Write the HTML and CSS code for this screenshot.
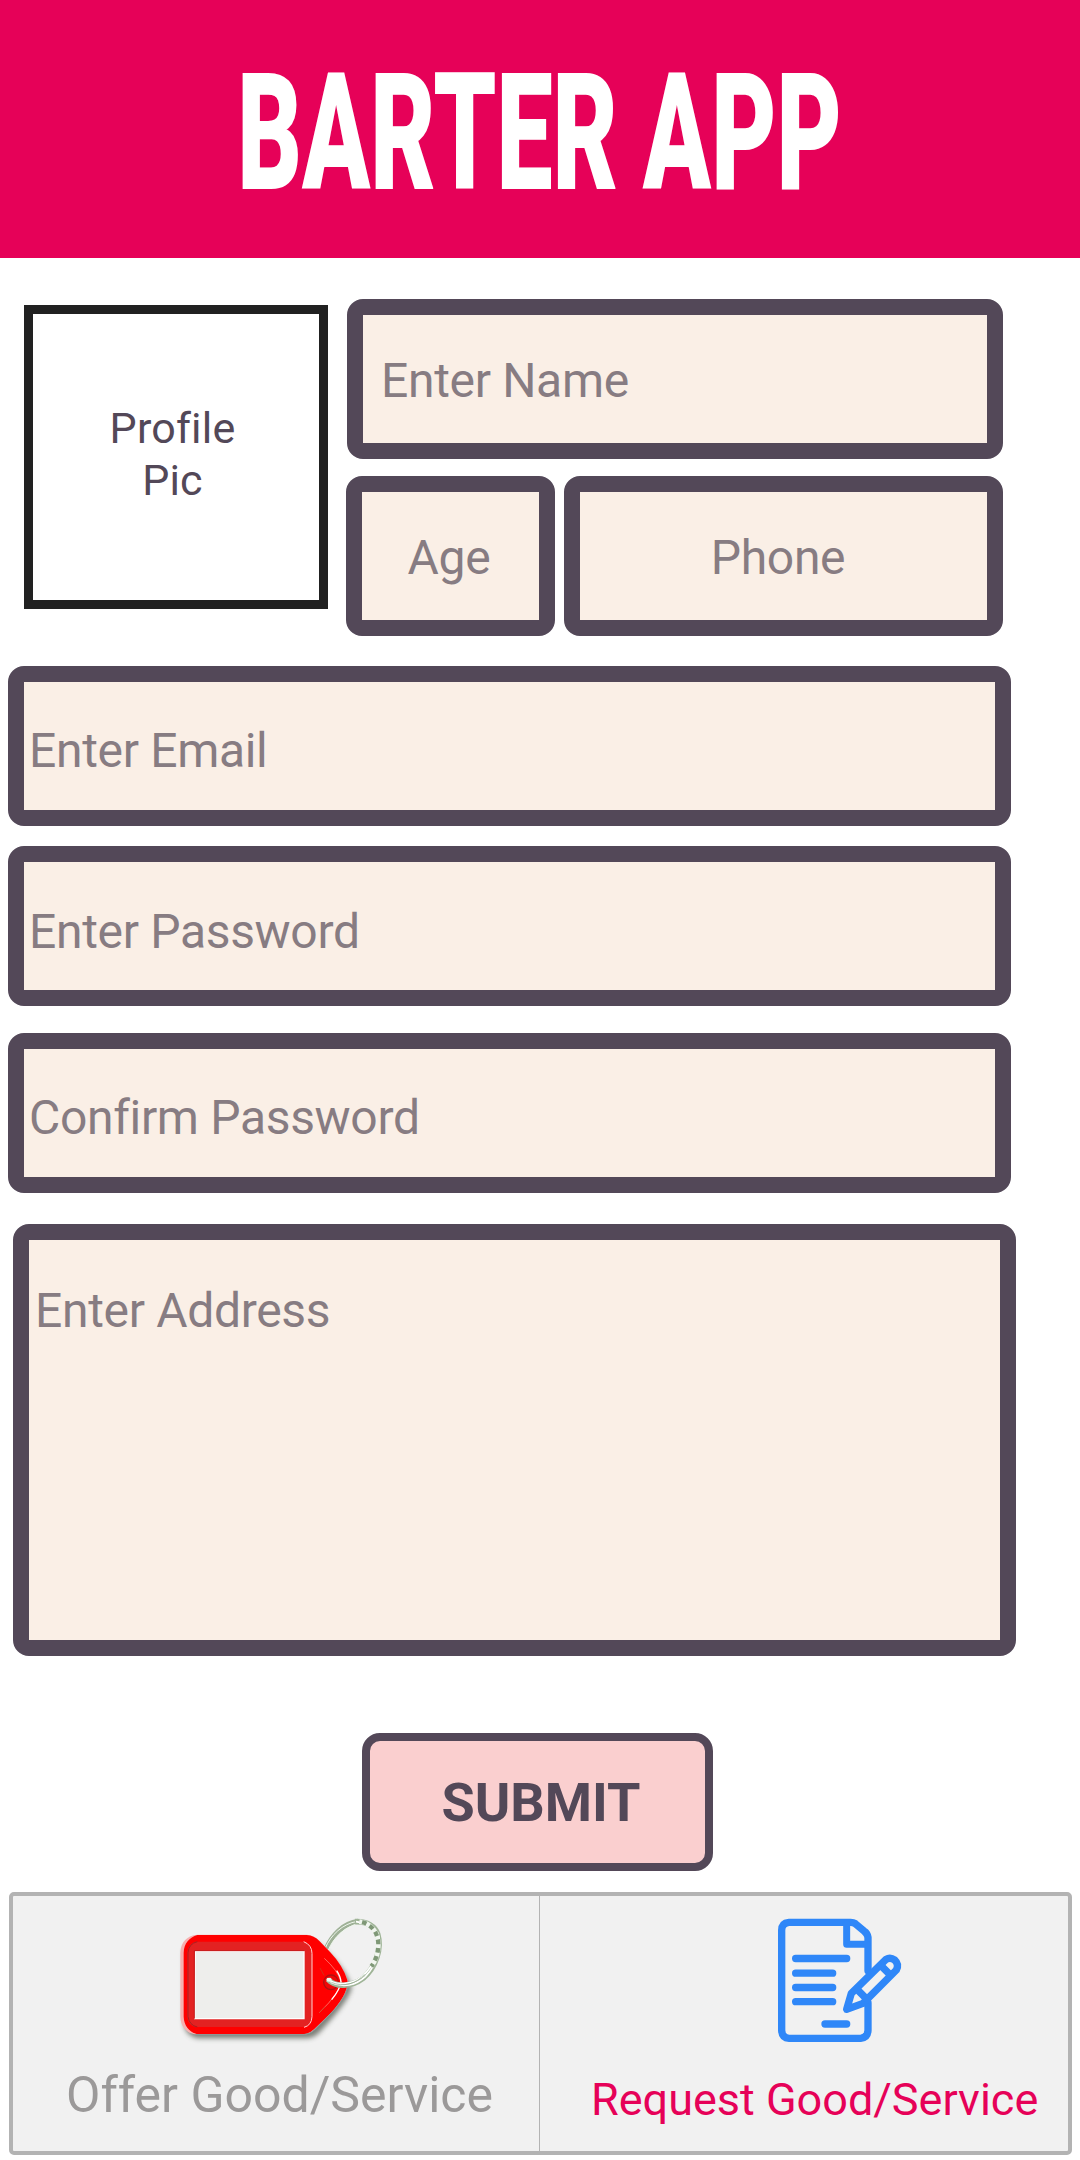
FILE: index.html
```html
<!DOCTYPE html>
<html lang="en">
<head>
<meta charset="utf-8">
<title>Barter App</title>
<link rel="stylesheet" href="styles.css">
</head>
<body>
<header class="header"><h1 class="title">BARTER APP</h1></header>
<main class="form">
  <section class="profile">
    <div class="picture">Profile<br>Pic</div>
    <div class="details">
      <div class="field name">Enter Name</div>
      <div class="row">
        <div class="field age">Age</div>
        <div class="field phone">Phone</div>
      </div>
    </div>
  </section>
  <div class="field wide email">Enter Email</div>
  <div class="field wide password">Enter Password</div>
  <div class="field wide confirm">Confirm Password</div>
  <div class="field address">Enter Address</div>
  <button class="submit">SUBMIT</button>
</main>
<nav class="tabs">
  <a class="tab offer">
    <svg class="tag" viewBox="0 0 720 480" aria-hidden="true">
      <defs>
        <filter id="soft" x="-20%" y="-20%" width="140%" height="150%"><feGaussianBlur stdDeviation="8"/></filter>
      </defs>
      <path d="M110 122H450Q480 130 500 155Q560 210 575 262Q570 300 480 395Q466 413 440 415H110Q76 405 72 372V160Q80 122 110 122Z" fill="#666b62" opacity=".85" filter="url(#soft)"/>
      <path d="M497 150C515 105 550 70 595 64" fill="none" stroke="#9fb197" stroke-width="15"/>
      <path d="M495 146C512 105 548 71 592 64M504 152C520 112 555 80 598 70" fill="none" stroke="#eef6ec" stroke-width="3"/>
      <path d="M112 104H440Q462 105 478 122L510 155Q548 195 563 240Q566 262 550 290Q530 325 498 355L464 389Q450 403 430 404H112C82 402 62 382 61 350V158C62 126 82 106 112 104Z" fill="#f6b0b0"/>
      <path d="M112 105H440Q462 106 478 123L510 156Q548 196 562 240Q565 262 549 290Q530 323 498 353L462 388Q448 402 430 403H112C88 396 72 378 71 350V158C72 130 88 112 112 105Z" fill="#f00"/>
      <path d="M106 404H430Q450 403 464 389L500 353Q552 303 564 263" fill="none" stroke="#839b99" stroke-width="3"/>
      <path d="M108 125H430Q456 133 456 160V350Q456 374 432 381H108Q84 376 82 350V155Q86 130 108 125Z" fill="#e32222"/>
      <path d="M112 125Q86 131 84 158V350Q88 376 112 381" fill="none" stroke="#a91f1f" stroke-width="3"/>
      <path d="M106 154H432V356H104Z" fill="#eeeeec" stroke="#fff" stroke-width="4"/>
      <path d="M103 356V152H434" fill="none" stroke="#c51414" stroke-width="3"/>
      <path d="M431 125Q456 135 456 160V350Q455 376 432 382" fill="none" stroke="#ffd6d6" stroke-width="3"/>
      <path d="M493 175Q532 210 543 244Q542 276 478 338" fill="none" stroke="#ff9a8e" stroke-width="2"/>
      <path d="M530 212Q542 230 543 246Q540 268 515 299" fill="none" stroke="#fff" stroke-width="4"/>
      <path d="M480 204L492 226M478 338L496 320" fill="none" stroke="#b84a22" stroke-width="2"/>
      <circle cx="513" cy="247" r="22" fill="#ef0808" stroke="#ad1212" stroke-width="4"/>
      <path d="M504 238C527 263 575 261 609 235C648 202 666 145 653 102C646 80 622 63 585 65" fill="none" stroke="#9fb497" stroke-width="17"/>
      <path d="M502 235C525 258 575 255 606 229C646 195 660 145 648 105C640 84 618 69 588 65M512 247C550 265 588 256 616 230C655 190 667 132 653 98" fill="none" stroke="#fff" stroke-width="5"/>
      <path d="M598 65C632 70 653 94 655 130C656 158 646 183 634 199" fill="none" stroke="#f1f6ef" stroke-width="14"/>
      <path d="M598 65C632 70 653 94 655 130C656 158 646 183 634 199" fill="none" stroke="#7f9877" stroke-width="13" stroke-dasharray="14 11" stroke-dashoffset="-8"/>
      <path d="M514 247C550 263 590 251 613 223" fill="none" stroke="#8ca386" stroke-width="2"/>
      <ellipse cx="507" cy="239" rx="8" ry="6" fill="#e9fff3"/>
    </svg>
    <span class="label">Offer Good/Service</span>
  </a>
  <a class="tab request">
    <svg class="doc" viewBox="0 0 480 480" fill="none" stroke="#2f87f8" stroke-width="22" stroke-linecap="round" stroke-linejoin="round" aria-hidden="true">
      <path d="M324 212V112Q322 100 313 94L286 71Q280 67 272 67H87Q65 69 65 91V391Q66 414 87 415H302Q323 413 324 391V308"/>
      <path d="M260 72V133H320" stroke-width="21"/>
      <path d="M107 175.500H260M107 219.500H218M107 262.500H218M107 305H218M195 372H260"/>
      <path d="M260 328L274 280L378 178Q391 170 404 180Q418 193 409 210L309 310Z"/>
      <path d="M366 200L393 227M289 266L321 298" stroke-linecap="butt"/>
    </svg>
    <span class="label">Request Good/Service</span>
  </a>
</nav>
</body>
</html>
```
FILE: styles.css
```css
* { box-sizing: border-box; }
body {
  margin: 0;
  width: 1080px;
  height: 2160px;
  overflow: hidden;
  background: #fff;
  color: #534858;
  font-family: Roboto, "Liberation Sans", sans-serif;
}
.header {
  height: 258px;
  background: #e60158;
  display: flex;
  justify-content: center;
}
.title {
  margin: 38px 0 0;
  font-size: 163px;
  line-height: 192px;
  font-weight: 900;
  color: #fff;
  white-space: nowrap;
  transform: translateX(-1px) scaleX(.615);
}
.form { display: flex; flex-direction: column; height: 1634px; }
.profile { display: flex; padding: 41px 0 0 24px; }
.picture {
  width: 304px;
  height: 304px;
  margin-top: 6px;
  border: 9px solid #212121;
  padding: 88px 7px 0 0;
  font-size: 43px;
  line-height: 52px;
  letter-spacing: .2px;
  text-align: center;
}
.details { margin-left: 18px; width: 657px; }
.row { display: flex; gap: 9px; margin-top: 17px; }
.field {
  height: 160px;
  border-radius: 16px;
  border: 16px solid #534858;
  background: #faefe6;
  color: #877c82;
  font-size: 48px;
  line-height: 128px;
  letter-spacing: -.32px;
  white-space: nowrap;
}
.field.name { margin-left: 1px; padding: 2px 0 0 18px; }
.field.age { width: 209px; padding: 2px 3px 0 0; text-align: center; }
.field.phone { width: 439px; padding: 2px 11px 0 0; text-align: center; }
.field.wide { width: 1003px; margin-left: 8px; padding: 5px 0 0 5px; }
.email { margin-top: 30px; }
.password { margin-top: 20px; }
.confirm { margin-top: 27px; }
.field.wide.password { padding-top: 6px; }
.field.address {
  width: 1003px;
  height: 432px;
  margin: 31px 0 0 13px;
  padding: 7px 0 0 6px;
}
.submit {
  width: 351px;
  height: 138px;
  margin: 77px 0 0 362px;
  padding: 2px 0 0 7px;
  border: 8px solid #534858;
  border-radius: 18px;
  background: #facfcf;
  color: #534858;
  font: 700 54px/120px Roboto, sans-serif;
}
.tabs {
  width: 1063px;
  height: 263px;
  margin-left: 9px;
  border: 4px solid #b3b3b3;
  border-radius: 5px;
  background: #f1f1f1;
  display: flex;
}
.tab { display: flex; flex-direction: column; }
.tab svg { display: block; height: 160px; margin-top: 4px; flex: none; }
.offer { width: 527px; border-right: 1px solid #b3b3b3; color: #9b9999; }
.tag { width: 240px; margin-left: 147px; }
.doc { width: 160px; margin-left: 220px; }
.label { line-height: 60px; white-space: nowrap; }
.offer .label { margin: 5px 0 0 53px; font-size: 50px; }
.request { color: #e60158; }
.request .label { margin: 10px 0 0 51px; font-size: 45px; }
```
